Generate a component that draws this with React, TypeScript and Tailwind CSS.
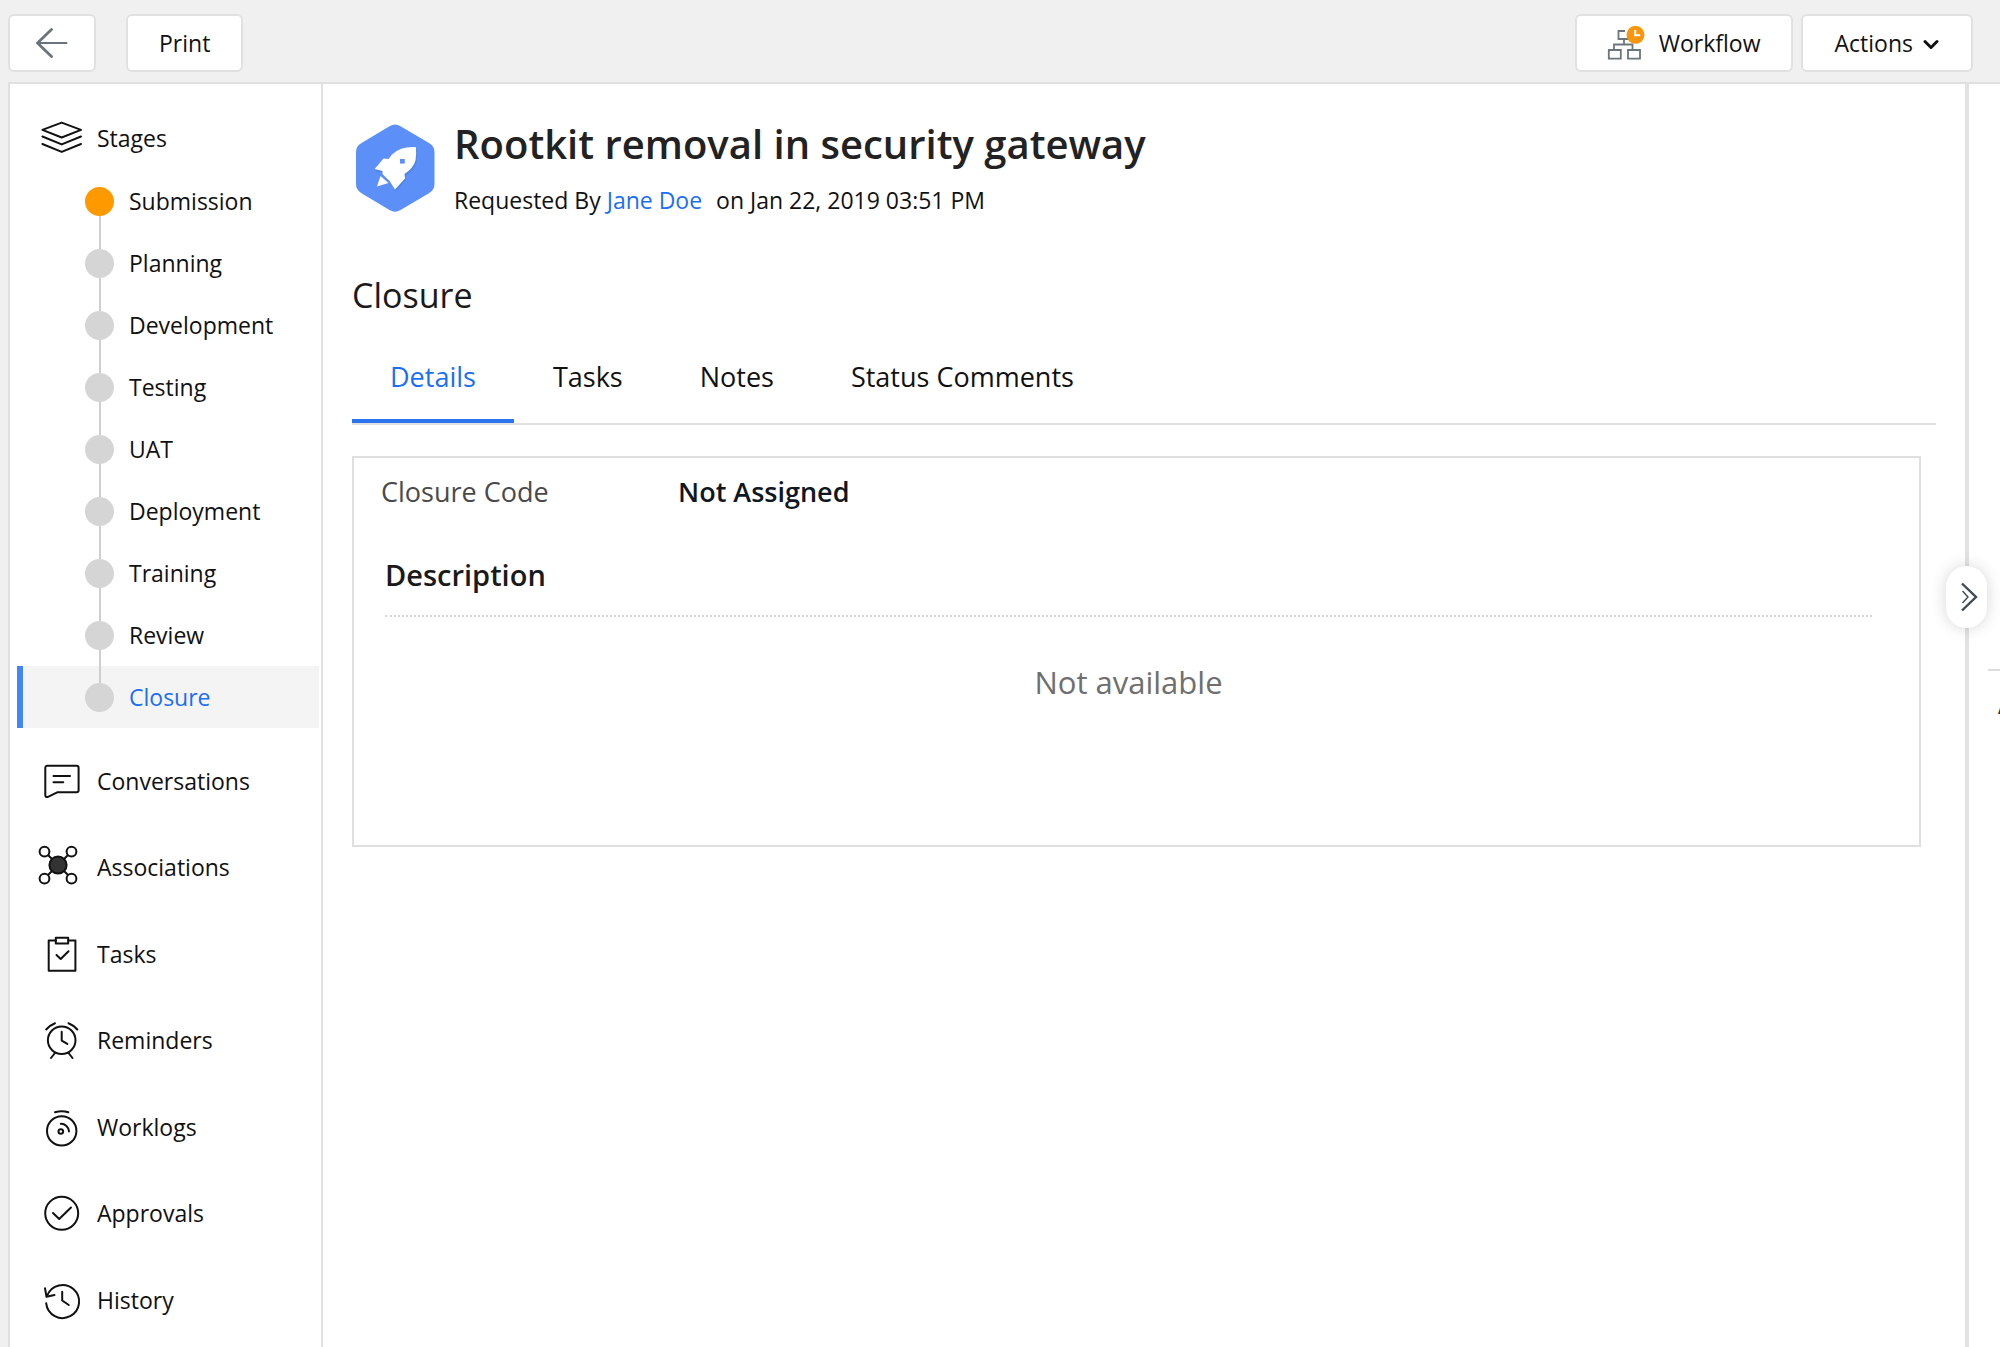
import type { ReactNode } from "react";

const stages = [
  "Submission",
  "Planning",
  "Development",
  "Testing",
  "UAT",
  "Deployment",
  "Training",
  "Review",
  "Closure",
];

const tabs = ["Details", "Tasks", "Notes", "Status Comments"];

function SideIcon({ children }: { children: ReactNode }) {
  return (
    <svg
      viewBox="0 0 48 48"
      className="size-12 shrink-0"
      fill="none"
      stroke="#111"
      strokeWidth="2"
      strokeLinecap="round"
      strokeLinejoin="round"
      aria-hidden="true"
    >
      {children}
    </svg>
  );
}

const sections: { label: string; icon: ReactNode }[] = [
  {
    label: "Conversations",
    icon: (
      <>
        <path d="M9 8.7h29.6a2 2 0 0 1 2 2v22.6a2 2 0 0 1-2 2H19.2L10 39.8c-1.600.7-2.700 0-2.700-1.500V10.700a2 2 0 0 1 1.700-2z" />
        <path d="M15.500 19h16.500M15.500 25.200h9.800" />
      </>
    ),
  },
  {
    label: "Associations",
    icon: (
      <>
        <path d="M10 11l20 20M30 11L10 31" />
        <circle cx="20" cy="21" r="8.600" fill="#333" />
        <circle cx="6.500" cy="7.600" r="4.900" fill="#fff" />
        <circle cx="33.500" cy="7.600" r="4.900" fill="#fff" />
        <circle cx="6.500" cy="34.600" r="4.900" fill="#fff" />
        <circle cx="33.500" cy="34.600" r="4.900" fill="#fff" />
      </>
    ),
  },
  {
    label: "Tasks",
    icon: (
      <>
        <path d="M18 10.500h-7.300v30.300h26.700V10.500H30" />
        <path d="M17.800 7.800h12.400v5.800H17.800z" />
        <path d="M18.500 25l4.200 4 7.800-7.800" />
      </>
    ),
  },
  {
    label: "Reminders",
    icon: (
      <>
        <circle cx="23.700" cy="24.300" r="13.800" />
        <path d="M23.700 15.800v8.800l5.600 3.300M8.200 13.500q3.500-4.200 8.800-6.300M39.300 13.500q-3.500-4.200-8.800-6.300M17 37l-4 5M30.500 37l4 5" />
      </>
    ),
  },
  {
    label: "Worklogs",
    icon: (
      <>
        <circle cx="23.700" cy="27.900" r="14.700" />
        <circle cx="22.800" cy="28.500" r="2.300" />
        <path d="M17 9.300q6.700-2.200 13.400 0M22.800 20.800a8 8 0 0 1 8.200 7.600" />
      </>
    ),
  },
  {
    label: "Approvals",
    icon: (
      <>
        <circle cx="23.700" cy="24.300" r="16.500" />
        <path d="M15 24l6.200 6 11.800-11.500" />
      </>
    ),
  },
  {
    label: "History",
    icon: (
      <>
        <path d="M8.200 27.300A16.500 16.500 0 1 0 9.200 19.600" />
        <path d="M7 12.300l1.500 8.400 8-1.700M24.200 15.800v8.700l6.600 4.500" />
      </>
    ),
  },
];

function BackArrow() {
  return (
    <svg viewBox="0 0 32 32" className="size-8" fill="none" stroke="#6b747b" strokeLinecap="round" strokeLinejoin="round" aria-hidden="true">
      <path d="M2 16h28.500" strokeWidth="2" />
      <path d="M15.500 2.500L1.500 16l14 13.500" strokeWidth="2.800" />
    </svg>
  );
}

function WorkflowIcon() {
  return (
    <svg viewBox="0 0 38 36" className="h-9 w-[38px]" fill="none" stroke="#6b757c" strokeWidth="1.800" aria-hidden="true">
      <path d="M18 6h-6.500v8h11.500M17 14v5.500M7 24.500v-5h18.500v5" />
      <path d="M1.800 25h12v8.600h-12zM21 25h12v8.600H21z" />
      <circle cx="28.500" cy="9.800" r="9" fill="#f9960f" stroke="none" />
      <path d="M28.200 5v5.300h5" stroke="#fff" strokeWidth="2" />
    </svg>
  );
}

function ProjectBadge() {
  return (
    <svg viewBox="0 0 80 88" className="h-[88px] w-20 shrink-0" aria-hidden="true">
      <path
        d="M34.500 2.200q5.500-3.400 11 0L74 19q5.500 3.200 5.500 9v32q0 6-5.500 9.200L45.500 86q-5.500 3.400-11 0L6.500 69.200Q1 66 1 60V28q0-5.800 5.500-9z"
        fill="#5c8ff8"
      />
      <path
        d="M61 23.200q-15-1-24 7.300L33.500 35l-5-.5L19.700 45l7.800 2v4.500l7 5.500 5.500 8.500L50 54.500l-.5-4.500q9-6 11-13.500 1-7 .5-13.300z"
        transform="translate(1 2)"
        fill="#4678dd"
        opacity="0.500"
      />
      <path
        d="M61 23.200q-15-1-24 7.300L33.500 35l-5-.5L19.700 45l7.800 2v4.500l7 5.500 5.500 8.500L50 54.500l-.5-4.500q9-6 11-13.500 1-7 .5-13.300z"
        fill="#fff"
      />
      <path d="M26 50l8.500 8.500" stroke="#5c8ff8" strokeWidth="2" />
      <path d="M25.500 52L22 62.500l11.500-3.500z" fill="#fff" />
      <path d="M45 35h4.800v4.600H45z" fill="#5c8ff8" />
    </svg>
  );
}

const toolButton =
  "flex h-[58px] items-center justify-center rounded-md border-2 border-[#e1e1e1] bg-white text-[23px] text-[#111]";

export default function App() {
  return (
    <div className="flex min-h-screen flex-col bg-[#f0f0f0] font-['Open_Sans',sans-serif] text-[23px] text-[#111]">
      <header className="flex items-start pt-3.5 pr-[27px] pb-2.5 pl-2">
        <button type="button" aria-label="Back" className={`${toolButton} w-[88px]`}>
          <BackArrow />
        </button>
        <button type="button" className={`${toolButton} ml-[30px] px-[31px]`}>
          Print
        </button>
        <button type="button" className={`${toolButton} ml-auto gap-3.5 px-[30px]`}>
          <WorkflowIcon />
          Workflow
        </button>
        <button type="button" className={`${toolButton} ml-2 gap-2.5 px-8`}>
          Actions
          <svg viewBox="0 0 16 12" className="mt-1 h-3 w-4" fill="none" stroke="#111" strokeWidth="3" strokeLinecap="round" strokeLinejoin="round" aria-hidden="true">
            <path d="M2 2.500l6 6 6-6" />
          </svg>
        </button>
      </header>

      <div className="ml-2 flex flex-1 border-t-2 border-l-2 border-[#e0e0e0] bg-white">
        <nav aria-label="Request sections" className="flex w-[313px] shrink-0 flex-col border-r-2 border-[#e0e0e0] pt-[23px] pb-1">
          <a href="#stages" className="mb-px flex h-[62px] items-center gap-[11px] pl-7">
            <SideIcon>
              <path d="M23.700 8.600L43 15.900 23.700 23.500 4.400 15.900z" />
              <path d="M4.400 22.500l19.300 7.900L43 22.500M4.400 30l19.300 7.900L43 30" />
            </SideIcon>
            Stages
          </a>
          <ol className="pr-0.5 pl-[7px]">
            {stages.map((stage, i) => {
              const active = stage === "Closure";
              return (
                <li key={stage}>
                  <a
                    href={`#${stage.toLowerCase()}`}
                    aria-current={active ? "step" : undefined}
                    className={`flex h-[62px] items-center border-l-[6px] pl-[62px] ${
                      active ? "border-[#4285f4] bg-[#f4f4f4] text-[#1a6ff4]" : "border-transparent"
                    }`}
                  >
                    <span className="mr-[15px] flex h-full w-[29px] flex-col items-center">
                      <span className={`w-0.5 flex-1 ${i === 0 ? "bg-transparent" : "bg-[#cfcfcf]"}`} />
                      <span className={`size-[29px] rounded-full ${i === 0 ? "bg-[#ff9900]" : "bg-[#d5d5d5]"}`} />
                      <span className={`w-0.5 flex-1 ${active ? "bg-transparent" : "bg-[#cfcfcf]"}`} />
                    </span>
                    {stage}
                  </a>
                </li>
              );
            })}
          </ol>
          <ul className="mt-2.5 grid flex-1 auto-rows-fr">
            {sections.map(({ label, icon }) => (
              <li key={label} className="flex">
                <a href={`#${label.toLowerCase()}`} className="flex flex-1 items-center gap-[11px] pl-7">
                  <SideIcon>{icon}</SideIcon>
                  {label}
                </a>
              </li>
            ))}
          </ul>
        </nav>

        <main className="min-w-0 flex-1 pt-9 pl-[29px]">
          <div className="flex gap-[19px] pl-[3px]">
            <div className="pt-1">
              <ProjectBadge />
            </div>
            <div>
              <h1 className="text-[40px] leading-12 font-semibold text-[#222]">
                Rootkit removal in security gateway
              </h1>
              <p className="mt-3.5 leading-9">
                Requested By{" "}
                <a href="#jane-doe" className="text-[#1a6ff4]">
                  Jane Doe
                </a>
                <span className="ml-3.5">on Jan 22, 2019 03:51 PM</span>
              </p>
            </div>
          </div>

          <h2 className="mt-[53px] text-[34px] leading-12 text-[#1a1a1a]">Closure</h2>

          <div role="tablist" className="mt-4 mr-[29px] flex gap-px border-b-2 border-[#e0e0e0]">
            {tabs.map((tab, i) => (
              <button
                key={tab}
                type="button"
                role="tab"
                aria-selected={i === 0}
                className={`h-[88px] border-b-4 px-[38px] text-[27px] ${
                  i === 0 ? "border-[#2a74f0] text-[#1a6ff4]" : "border-transparent"
                }`}
              >
                {tab}
              </button>
            ))}
          </div>

          <section className="mt-[31px] mr-11 border-2 border-[#dfdfdf] pt-3.5 pb-[139px] pl-[27px]">
            <dl className="flex text-[27px] leading-10">
              <dt className="w-[297px] text-[#4a4a4a]">Closure Code</dt>
              <dd className="font-semibold text-[#0f1720]">Not Assigned</dd>
            </dl>
            <div className="mt-[41px] mr-[47px] ml-1">
              <h3 className="border-b-2 border-dotted border-[#d4d4d4] pb-[18px] text-[29px] leading-11 font-semibold text-[#1a1a1a]">
                Description
              </h3>
              <p className="mt-[41px] text-center text-[31px] leading-12 text-[#6f6f6f]">Not available</p>
            </div>
          </section>
        </main>

        <aside aria-label="Request properties" className="relative w-[35px] shrink-0 border-l-4 border-[#e2e2e2]">
          <button
            type="button"
            aria-label="Expand properties"
            className="absolute top-[482px] -left-[23px] flex h-[62px] w-[41px] items-center justify-center rounded-full bg-white pl-1 shadow-[0_0_16px_rgba(0,0,0,0.16)]"
          >
            <svg viewBox="0 0 18 30" className="h-[30px] w-[18px]" fill="none" stroke="#3f4a54" aria-hidden="true">
              <path d="M2 1.500L16 15 2 28.500" strokeWidth="2.400" />
              <path d="M2.500 9l5.500 6-5.500 6" strokeWidth="1.400" />
            </svg>
          </button>
          <div className="mt-[585px] ml-[19px] overflow-hidden border-t-2 border-[#dcdcdc] pt-5 pl-2.5 font-bold leading-7 text-[#333]">
            A
          </div>
        </aside>
      </div>
    </div>
  );
}
